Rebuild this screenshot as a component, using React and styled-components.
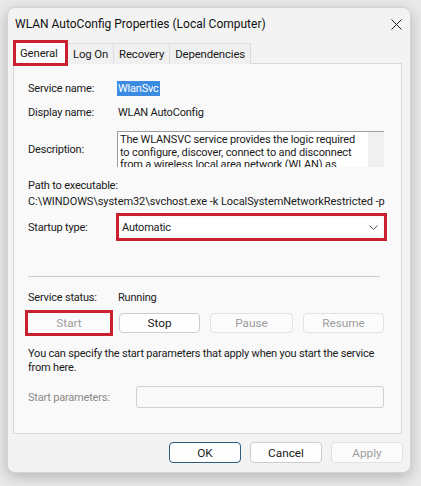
import React from "react";
import styled, { createGlobalStyle } from "styled-components";

const GlobalStyle = createGlobalStyle`
  html, body {
    margin: 0;
    padding: 0;
    background: #e9e9e9;
  }
  body {
    font-family: Roboto, "Noto Sans", Arial, sans-serif;
    font-size: 11px;
    letter-spacing: -0.2px;
    color: #1a1a1a;
  }
`;

const Page = styled.div`
  width: 421px;
  height: 486px;
  padding: 7px 0 0 7px;
  box-sizing: border-box;
`;

const Window = styled.div`
  width: 404px;
  height: 466px;
  background: #f3f3f3;
  border: 1px solid #d4d4d4;
  border-radius: 8px;
  box-sizing: border-box;
  box-shadow: 0 4px 14px rgba(0, 0, 0, 0.22);
  display: flex;
  flex-direction: column;
  overflow: hidden;
`;

const TitleBar = styled.div`
  height: 32px;
  display: flex;
  align-items: center;
  justify-content: space-between;
  padding: 0 8px 0 7px;
  font-size: 12px;
  letter-spacing: 0;
  color: #111;
`;

const CloseButton = styled.svg`
  width: 11px;
  height: 11px;
`;

const Tabs = styled.div`
  display: flex;
  align-items: flex-end;
  height: 24px;
  padding-left: 5px;
  position: relative;
  z-index: 1;
  margin-bottom: -1px;
`;

const Tab = styled.div`
  height: ${(p) => (p.$active ? "26px" : "21px")};
  margin-bottom: ${(p) => (p.$active ? "-2px" : "0")};
  ${(p) => (p.$active ? "width: 55px; padding: 0 0 0 4px;" : "padding: 0 5px;")}
  box-sizing: border-box;
  display: flex;
  align-items: center;
  background: ${(p) => (p.$active ? "#ffffff" : "#f0f0f0")};
  border: ${(p) => (p.$active ? "3px solid #c8202e" : "1px solid #dcdcdc")};
  border-bottom: ${(p) => (p.$active ? "3px solid #c8202e" : "none")};
  border-left: ${(p) => (p.$active ? "3px solid #c8202e" : "none")};
  font-size: 11.4px;
  letter-spacing: -0.15px;
`;

const Panel = styled.div`
  margin: 0 8px 0 5px;
  height: 371px;
  background: #f9f9f9;
  border: 1px solid #d9d9d9;
  box-sizing: border-box;
  padding: 16px 17px 0 14px;
  display: flex;
  flex-direction: column;
`;

const Row = styled.div`
  display: flex;
  align-items: center;
  margin-top: ${(p) => p.$gap || 0}px;
  min-height: 16px;
`;

const Label = styled.div`
  width: ${(p) => p.$w || 89}px;
  flex-shrink: 0;
  color: ${(p) => (p.$disabled ? "#8a8a8a" : "#1a1a1a")};
`;

const Value = styled.span`
  padding: 0 1px;
`;

const Selected = styled.span`
  background: #3b8be0;
  color: #fff;
  padding: 1px 1px;
`;

const DescriptionBox = styled.div`
  width: 267px;
  height: 36px;
  display: flex;
  background: #fff;
  border-top: 1px solid #9c9c9c;
  border-left: 1px solid #9c9c9c;
  box-sizing: border-box;
  overflow: hidden;
`;

const DescriptionText = styled.div`
  flex: 1;
  padding: 2px 7px 0 2px;
  line-height: 12.5px;
  font-size: 11px;
  letter-spacing: -0.15px;
`;

const ScrollTrack = styled.div`
  width: 16px;
  background: #f0f0f0;
`;

const Text = styled.div`
  margin-top: ${(p) => p.$gap || 0}px;
  line-height: ${(p) => p.$lh || 16}px;
  white-space: ${(p) => (p.$nowrap ? "nowrap" : "normal")};
`;

const PathText = styled(Text)`
  letter-spacing: -0.07px;
`;

const Highlight = styled.div`
  border: 3px solid #c8202e;
  box-sizing: border-box;
  padding: 2px;
  display: flex;
  margin-left: -1px;
`;

const Combo = styled.div`
  width: 261px;
  height: 18px;
  background: #fff;
  display: flex;
  align-items: center;
  justify-content: space-between;
  padding: 0 4px 0 1px;
  box-sizing: border-box;
`;

const Chevron = styled.svg`
  width: 9px;
  height: 5px;
`;

const Separator = styled.div`
  height: 1px;
  background: #c9c9c9;
  margin: 35px 4px 0 0;
`;

const ButtonRow = styled.div`
  display: flex;
  align-items: center;
  gap: 9px;
  margin: 5px 0 0 -3px;
`;

const Button = styled.div`
  width: ${(p) => p.$w || 81}px;
  height: ${(p) => p.$h || 20}px;
  flex-shrink: 0;
  box-sizing: border-box;
  display: flex;
  align-items: center;
  justify-content: center;
  border-radius: 4px;
  background: ${(p) => (p.$disabled ? "#fbfbfb" : "#fefefe")};
  border: ${(p) =>
    p.$bare
      ? "none"
      : p.$default
      ? "1.5px solid #2d5d7a"
      : p.$disabled
      ? "1px solid #e2e2e2"
      : "1px solid #cdcdcd"};
  color: ${(p) => (p.$disabled ? "#9d9d9d" : "#1a1a1a")};
  font-size: 11.8px;
  letter-spacing: 0;
`;

const StartFrame = styled(Highlight)`
  width: 88px;
  height: 26px;
  padding: 1px 2px;
  margin-left: 0;
  margin-right: -3px;
`;

const ParamInput = styled.div`
  width: 249px;
  height: 22px;
  border: 1px solid #cfcfcf;
  border-radius: 3px;
  background: #f9f9f9;
  box-sizing: border-box;
`;

const Footer = styled.div`
  display: flex;
  justify-content: flex-end;
  gap: 9px;
  padding: 8px 7px 0 0;
`;

export default function App() {
  return (
    <Page>
      <GlobalStyle />
      <Window>
        <TitleBar>
          <span>WLAN AutoConfig Properties (Local Computer)</span>
          <CloseButton viewBox="0 0 11 11">
            <path d="M0.5 0.5 L10.5 10.5 M10.5 0.5 L0.5 10.5" stroke="#222" strokeWidth="1" fill="none" />
          </CloseButton>
        </TitleBar>

        <Tabs>
          <Tab $active>General</Tab>
          <Tab>Log On</Tab>
          <Tab>Recovery</Tab>
          <Tab>Dependencies</Tab>
        </Tabs>

        <Panel>
          <Row>
            <Label>Service name:</Label>
            <Selected>WlanSvc</Selected>
          </Row>
          <Row $gap={8}>
            <Label>Display name:</Label>
            <Value>WLAN AutoConfig</Value>
          </Row>
          <Row $gap={11}>
            <Label>Description:</Label>
            <DescriptionBox>
              <DescriptionText>
                The WLANSVC service provides the logic required to configure, discover, connect to and disconnect
                from a wireless local area network (WLAN) as defined by IEEE 802.11 standards.
              </DescriptionText>
              <ScrollTrack />
            </DescriptionBox>
          </Row>
          <Text $gap={11}>Path to executable:</Text>
          <PathText $nowrap>C:\WINDOWS\system32\svchost.exe -k LocalSystemNetworkRestricted -p</PathText>
          <Row $gap={3}>
            <Label>Startup type:</Label>
            <Highlight>
              <Combo>
                <span>Automatic</span>
                <Chevron viewBox="0 0 9 5">
                  <path d="M0.5 0.5 L4.5 4.5 L8.5 0.5" stroke="#555" strokeWidth="1" fill="none" />
                </Chevron>
              </Combo>
            </Highlight>
          </Row>

          <Separator />

          <Row $gap={12}>
            <Label>Service status:</Label>
            <Value>Running</Value>
          </Row>
          <ButtonRow>
            <StartFrame>
              <Button $disabled $bare $w={78} $h={18}>Start</Button>
            </StartFrame>
            <Button>Stop</Button>
            <Button $disabled $w={83} style={{ marginLeft: 1 }}>Pause</Button>
            <Button $disabled style={{ marginLeft: 1 }}>Resume</Button>
          </ButtonRow>

          <Text $gap={11} $lh={14}>
            You can specify the start parameters that apply when you start the service from here.
          </Text>

          <Row $gap={11}>
            <Label $disabled $w={108}>Start parameters:</Label>
            <ParamInput />
          </Row>
        </Panel>

        <Footer>
          <Button $default $w={72} $h={21}>OK</Button>
          <Button $w={72} $h={21}>Cancel</Button>
          <Button $disabled $w={72} $h={21}>Apply</Button>
        </Footer>
      </Window>
    </Page>
  );
}
